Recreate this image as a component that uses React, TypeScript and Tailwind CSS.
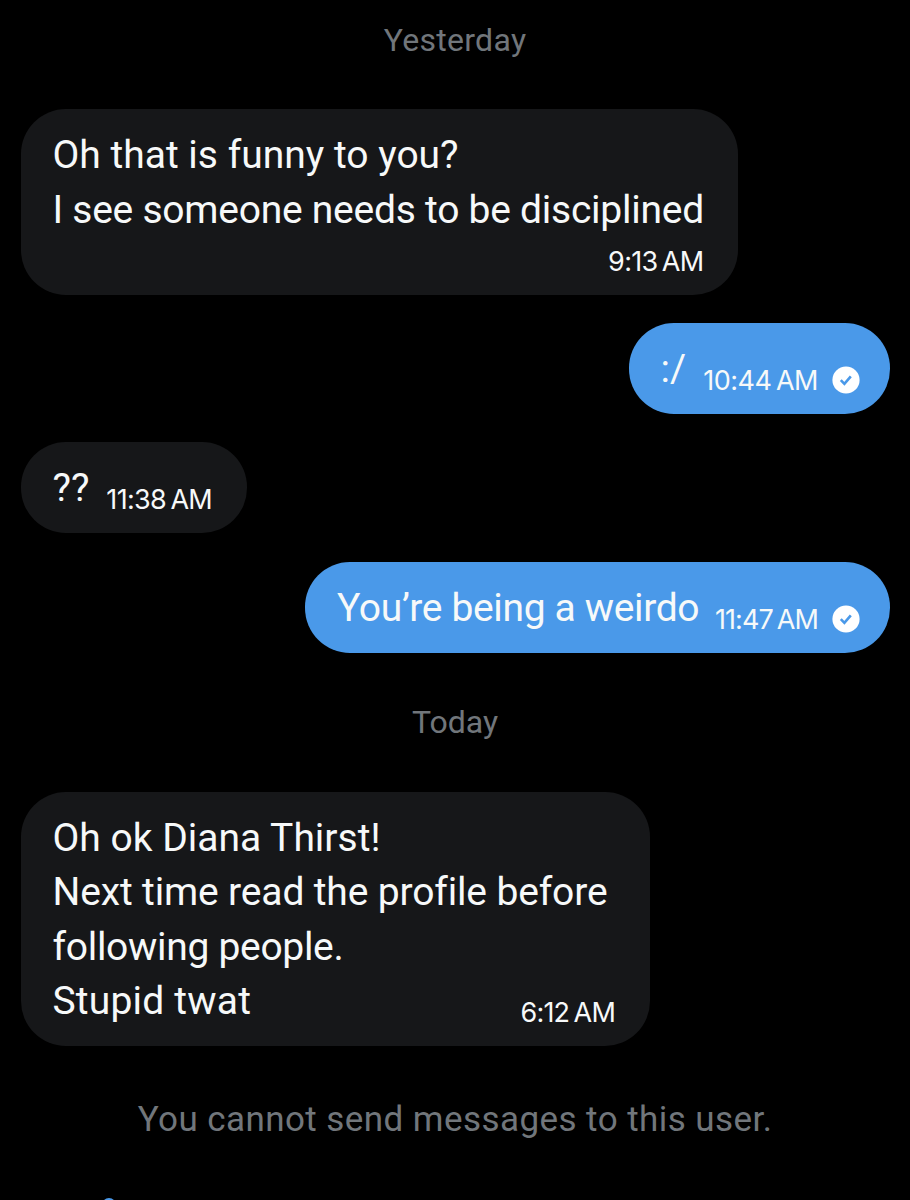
type Line = { text: string; className?: string };

type Message = {
  id: number;
  mine?: boolean;
  stacked?: boolean;
  lines: Line[];
  time: string;
  timeClass?: string;
  bubble: string;
};

const yesterday: Message[] = [
  {
    id: 1,
    stacked: true,
    lines: [
      { text: 'Oh that is funny to you?' },
      { text: 'I see someone needs to be disciplined', className: 'tracking-[-0.25px]' },
    ],
    time: '9:13 AM',
    timeClass: 'tracking-[-0.7px]',
    bubble: 'w-[717.5px] h-[185.5px]',
  },
  {
    id: 2,
    mine: true,
    lines: [{ text: ':/' }],
    time: '10:44 AM',
    timeClass: 'tracking-[-0.5px]',
    bubble: 'w-[261px] h-[91px]',
  },
  {
    id: 3,
    lines: [{ text: '??' }],
    time: '11:38 AM',
    timeClass: 'tracking-[-0.7px]',
    bubble: 'w-[226px] h-[91px]',
  },
  {
    id: 4,
    mine: true,
    lines: [{ text: 'You’re being a weirdo', className: 'tracking-[-0.35px]' }],
    time: '11:47 AM',
    timeClass: 'tracking-[-0.95px]',
    bubble: 'w-[584.5px] h-[91px]',
  },
];

const today: Message[] = [
  {
    id: 5,
    lines: [
      { text: 'Oh ok Diana Thirst!' },
      { text: 'Next time read the profile before', className: 'tracking-[-0.15px]' },
      { text: 'following people.', className: 'tracking-[-0.3px]' },
      { text: 'Stupid twat', className: 'tracking-[0.2px]' },
    ],
    time: '6:12 AM',
    timeClass: 'tracking-[-0.8px]',
    bubble: 'w-[629px] h-[254px]',
  },
];

const CheckBadge = () => (
  <svg className="ml-[14px] mb-[2px] size-[28px] shrink-0" viewBox="0 0 28 28">
    <circle cx="14" cy="14" r="13.6" fill="#fff" />
    <path d="M8.8 14.2l3.6 3.7 6.4-7.6" fill="none" stroke="#4a99e9" strokeWidth="2.6" />
  </svg>
);

const Bubble = ({ message }: { message: Message }) => {
  const { mine, stacked, lines, time, timeClass, bubble } = message;

  return (
    <div
      className={`flex justify-between rounded-[45px] pt-[19px] pl-[32px] whitespace-nowrap ${bubble} ${
        mine ? 'self-end bg-[#4a99e9] pr-[29.5px]' : 'self-start bg-[#161719] pr-[34.5px]'
      } ${stacked ? 'flex-col' : 'pb-[18px]'}`}
    >
      <div className="min-w-0 flex-1 text-[39px] leading-[54.5px]">
        {lines.map((line) => (
          <p key={line.text}>
            <span className={line.className}>{line.text}</span>
          </p>
        ))}
      </div>
      <div
        className={`flex items-center self-end font-['Inter',sans-serif] text-[27px] leading-[30px] [word-spacing:-2.5px] ${
          stacked ? 'mb-[18px]' : ''
        }`}
      >
        <span className={timeClass}>{time}</span>
        {mine && <CheckBadge />}
      </div>
    </div>
  );
};

export default function App() {
  return (
    <div className="h-[1200px] w-[910px] overflow-hidden bg-black px-[20.5px] font-['Roboto',sans-serif] text-[#f7f9f9]">
      <p className="pt-[19.5px] text-center text-[32px] leading-[40px] tracking-[0.3px] text-[#71767b]">
        Yesterday
      </p>
      <div className="mt-[49.5px] flex flex-col gap-[28.4px]">
        {yesterday.map((message) => (
          <Bubble key={message.id} message={message} />
        ))}
      </div>
      <p className="mt-[49.5px] text-center text-[32px] leading-[40px] text-[#71767b]">Today</p>
      <div className="mt-[49.5px] flex flex-col">
        {today.map((message) => (
          <Bubble key={message.id} message={message} />
        ))}
      </div>
      <p className="mt-[50px] text-center text-[35px] leading-[48px] tracking-[0.43px] text-[#71767b]">
        You cannot send messages to this user.
      </p>
      {/* top edge of the compose button */}
      <div className="mt-[54.5px] ml-[81px] size-[14px] rounded-full bg-[#4a99e9]" />
    </div>
  );
}
